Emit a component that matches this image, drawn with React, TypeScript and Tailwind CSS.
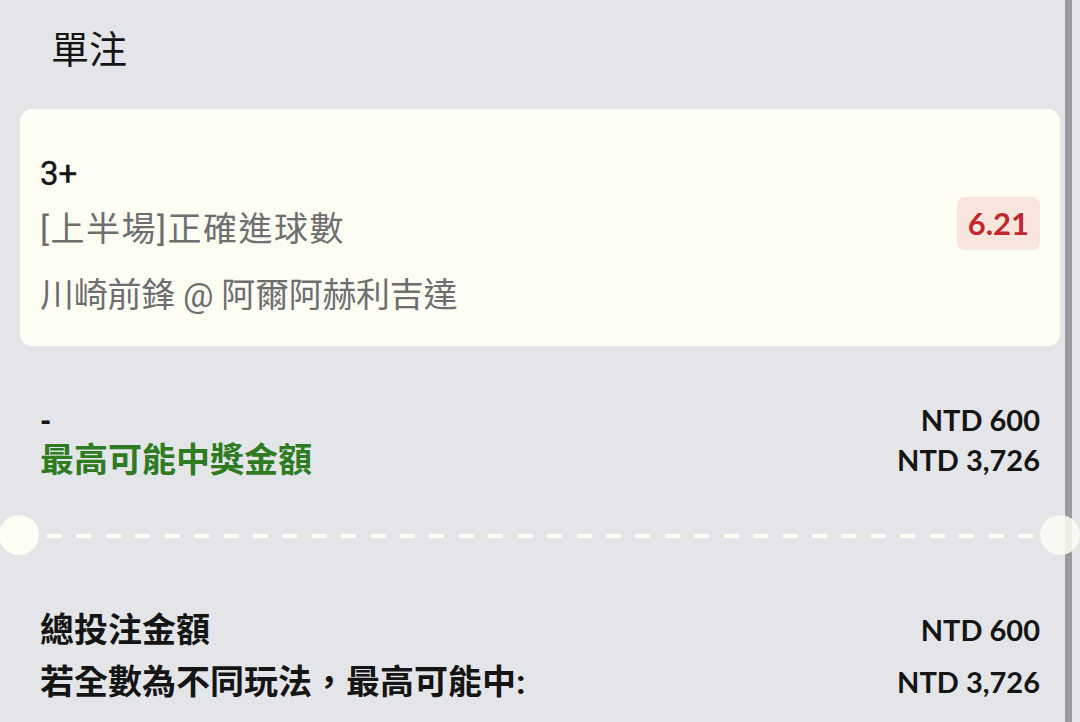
const cjk = "font-['Roboto','Noto_Sans_CJK_TC',sans-serif]";
const num = "font-['Lato','Noto_Sans_CJK_TC',sans-serif]";

const dashes = Array.from({ length: 34 }, (_, i) => i);

const AmountRow = ({
  label,
  amount,
  labelClass,
  height,
}: {
  label: string;
  amount: string;
  labelClass: string;
  height: string;
}) => (
  <div className={`flex items-center justify-between ${height}`}>
    <span className={labelClass}>{label}</span>
    <span className={`${num} text-[29px] font-bold text-[#151515]`}>{amount}</span>
  </div>
);

export default function App() {
  return (
    <div className="relative h-[722px] w-[1080px] overflow-hidden bg-[#e4e5e9]">
      {/* scrollbar */}
      <div className="absolute bottom-0 right-[8px] top-0 w-[7px] bg-[#999a9c]" />

      <div className="px-5">
        <div className={`${cjk} flex h-[100px] items-center pl-[31px] text-[38px] text-[#151515]`}>
          單注
        </div>

        {/* selection card */}
        <div className="mt-[9px] flex h-[237px] items-start justify-between rounded-[12px] bg-[#fdfdf4] px-5 pt-[45px]">
          <div className={cjk}>
            <div className="flex h-[40px] items-center text-[33px] text-[#151515] [-webkit-text-stroke:0.4px_#151515]">
              3+
            </div>
            <div className="flex h-[70px] items-center text-[34px] tracking-[1.5px] text-[#6e6e6e]">
              [上半場]正確進球數
            </div>
            <div className="flex h-[62px] items-center text-[34px] tracking-[-0.3px] text-[#6e6e6e]">
              川崎前鋒 @ 阿爾阿赫利吉達
            </div>
          </div>
          <div
            className={`${num} mt-[43px] flex h-[53px] items-center rounded-[8px] bg-[#f8e5de] px-[11px] text-[31px] font-bold text-[#c0282c]`}
          >
            6.21
          </div>
        </div>

        <div className="mt-[54px] px-5">
          <AmountRow
            label="-"
            amount="NTD 600"
            height="h-[40px]"
            labelClass={`${num} text-[30px] font-black text-[#151515]`}
          />
          <AmountRow
            label="最高可能中獎金額"
            amount="NTD 3,726"
            height="h-[40px]"
            labelClass={`${cjk} text-[34px] font-bold text-[#2e7b21]`}
          />
        </div>

        {/* perforation */}
        <div className="relative -mx-5 mt-[35px] h-[40px]">
          <div className="absolute left-[-1px] top-0 h-10 w-10 rounded-full bg-[#fdfdf4]" />
          <div className="absolute left-[47px] top-[19px] flex w-[986px] justify-between">
            {dashes.map((d) => (
              <div key={d} className="h-[4px] w-[15px] bg-[#fdfdf4]" />
            ))}
          </div>
          <div className="absolute right-0 top-0 z-10 h-10 w-10 rounded-full bg-[#fdfdf4]/85" />
        </div>

        <div className="mt-[53px] px-5">
          <AmountRow
            label="總投注金額"
            amount="NTD 600"
            height="h-[44px]"
            labelClass={`${cjk} text-[34px] font-bold text-[#151515]`}
          />
          <AmountRow
            label="若全數為不同玩法，最高可能中:"
            amount="NTD 3,726"
            height="h-[60px]"
            labelClass={`${cjk} text-[34px] font-bold text-[#151515]`}
          />
        </div>
      </div>
    </div>
  );
}
